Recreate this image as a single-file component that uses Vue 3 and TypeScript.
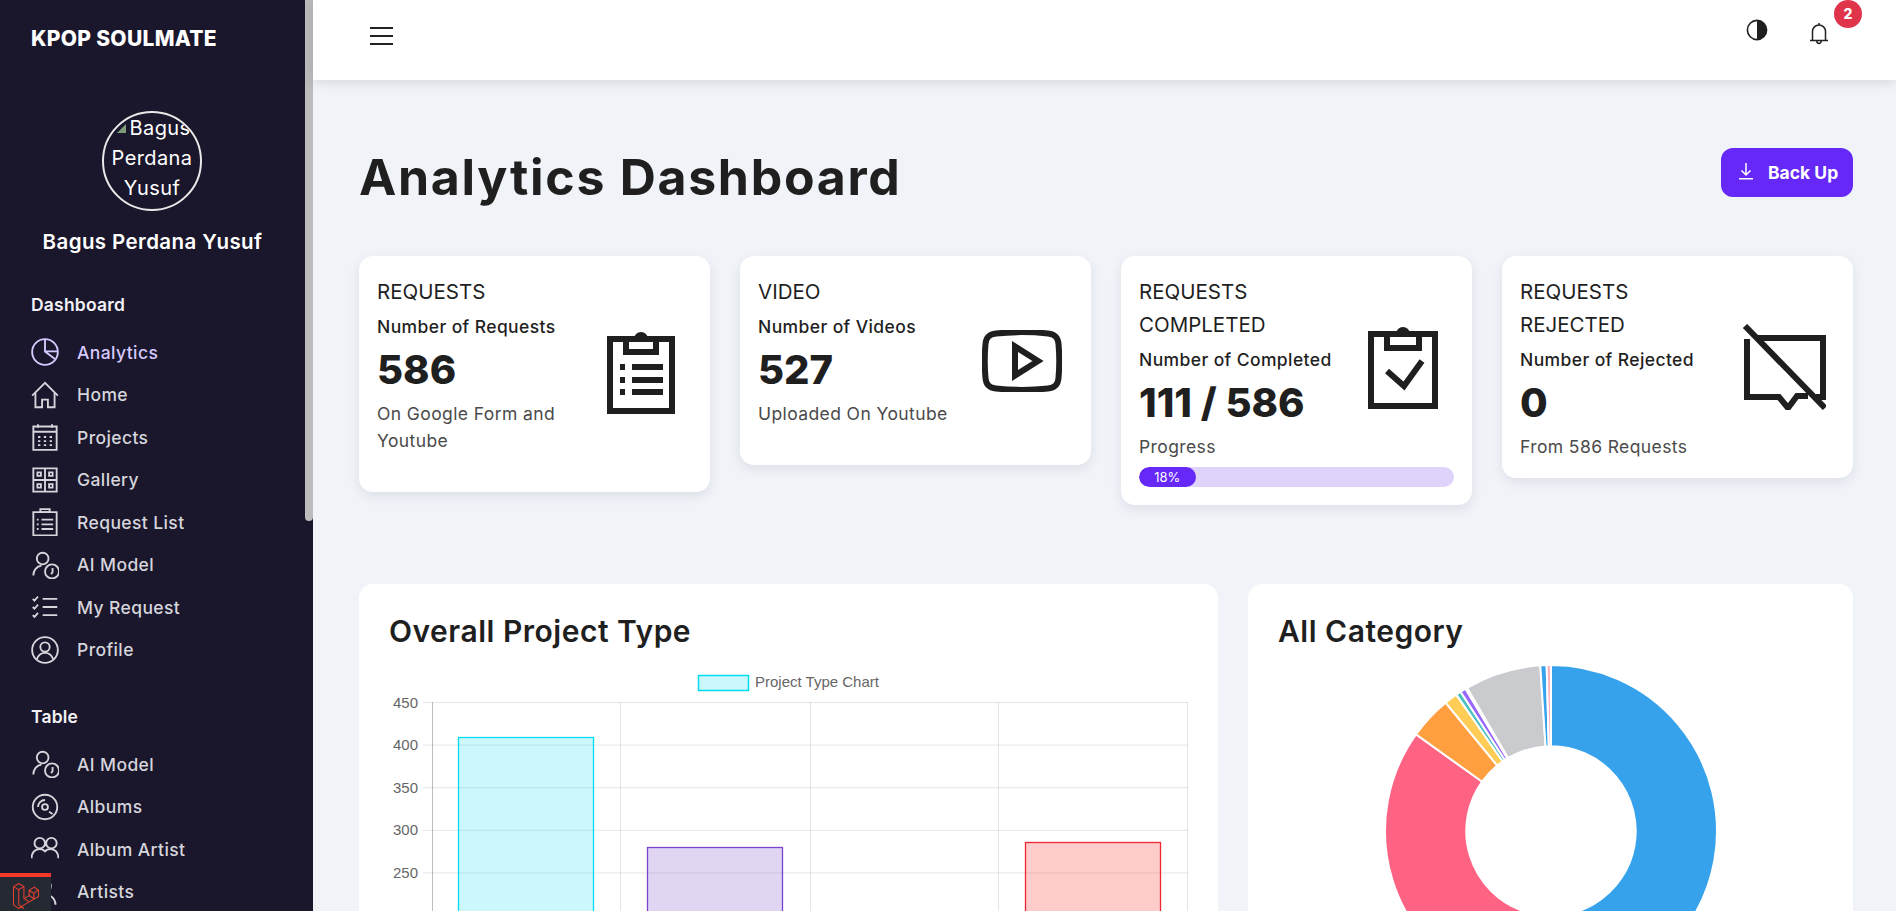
<template>
  <div class="shell">
    <aside class="sidebar">
      <div class="brand">KPOP SOULMATE</div>
      <div class="avatar">
        <svg class="broken" viewBox="0 0 16 16"><path d="M3 13 12 4v9z" fill="#7c9c78" /></svg>Bagus Perdana Yusuf
      </div>
      <div class="user-name">Bagus Perdana Yusuf</div>

      <template v-for="group in menu" :key="group.title">
        <div class="menu-title">{{ group.title }}</div>
        <ul class="menu">
          <li v-for="item in group.items" :key="item.label" class="menu-item" :class="{ active: item.active }">
            <svg class="menu-icon" viewBox="0 0 24 24">
              <path v-for="d in icons[item.icon]" :key="d" :d="d" />
            </svg>
            <span>{{ item.label }}</span>
          </li>
        </ul>
      </template>

      <div class="scroll-thumb"></div>
      <div class="debug-tab">
        <svg viewBox="0 0 25 25" width="26" height="26">
          <path d="M.5 3.500 5.500.5l5 3V15l5-3V7l5-3 4 3v6l-14 8-5 3.500-5-3.500zM.5 3.500l5 3 5-3M5.500 6.500V21l5 3.500M10.500 15l4.500 2.500M15.500 12l4.500 3M15.500 7l4.500 3 4-3M20 10v5" />
        </svg>
      </div>
    </aside>

    <div class="content">
      <header class="topbar">
        <div class="burger"><i></i><i></i><i></i></div>
        <div class="top-actions">
          <svg class="contrast" viewBox="0 0 22 22">
            <circle cx="11" cy="11" r="9.6" fill="none" stroke="#1f1f1f" stroke-width="1.6" />
            <path d="M11 1.4a9.6 9.6 0 0 1 0 19.2z" fill="#1f1f1f" />
          </svg>
          <div class="bell-wrap">
            <svg class="bell" viewBox="0 0 20 24">
              <path d="M1 18.5h18M3.5 18.5V9.5a6.5 6.5 0 0 1 13 0v9M10 1v2M7.8 19a2.2 2.4 0 0 0 4.4 0" />
            </svg>
            <span class="badge">2</span>
          </div>
        </div>
      </header>

      <main class="page">
        <div class="page-head">
          <h1>Analytics Dashboard</h1>
          <button class="backup">
            <svg viewBox="0 0 14 18" width="14" height="18">
              <path d="M7 1v11.5M2.5 8.5 7 13l4.5-4.500M0 16.800h14" />
            </svg>
            Back Up
          </button>
        </div>

        <section class="stats">
          <article class="stat">
            <div class="stat-row">
              <div class="stat-text">
                <h5>REQUESTS</h5>
                <h6>Number of Requests</h6>
                <div class="num">586</div>
                <p class="sub tail">On Google Form and Youtube</p>
              </div>
              <div class="stat-icon raised">
                <svg viewBox="0 0 68 84" width="68" height="84">
                  <path class="heavy" d="M3 9h62v72H3zM19 9v13h30V9" />
                  <path class="knob" d="M27 9a7 7 0 0 1 14 0v3h-5V8h-4v4h-5z" />
                  <path class="heavy" d="M13 37h5M25 37h31M13 50h5M25 50h31M13 62h5M25 62h31" />
                </svg>
              </div>
            </div>
          </article>

          <article class="stat">
            <div class="stat-row">
              <div class="stat-text">
                <h5>VIDEO</h5>
                <h6>Number of Videos</h6>
                <div class="num">527</div>
                <p class="sub tail">Uploaded On Youtube</p>
              </div>
              <div class="stat-icon">
                <svg viewBox="0 0 80 62" width="80" height="62">
                  <path class="heavy" d="M14 3.500C30 1.800 50 1.800 66 3.500 73 4.200 76 7.500 76.500 14c1 11 1 23 0 34-.5 6.500-3.500 9.800-10.500 10.500-16 1.700-36 1.700-52 0C7 57.800 4 54.500 3.500 48c-1-11-1-23 0-34C4 7.500 7 4.200 14 3.500z" />
                  <path class="heavy" d="M33 16.500v29L56 31z" />
                </svg>
              </div>
            </div>
          </article>

          <article class="stat">
            <div class="stat-row">
              <div class="stat-text">
                <h5>REQUESTS COMPLETED</h5>
                <h6>Number of Completed</h6>
                <div class="num">111 / 586</div>
                <p class="sub">Progress</p>
              </div>
              <div class="stat-icon">
                <svg viewBox="0 0 70 84" width="70" height="84">
                  <path class="heavy" d="M3 9h64v72H3zM19 9v14h32V9" />
                  <path class="knob" d="M28 9a7 7 0 0 1 14 0v3h-5V8h-4v4h-5z" />
                  <path class="heavy" d="M19 46l17 15 18-25" />
                </svg>
              </div>
            </div>
            <div class="progress">
              <div class="progress-bar" :style="{ width: completedPct + '%' }">{{ completedPct }}%</div>
            </div>
          </article>

          <article class="stat">
            <div class="stat-row">
              <div class="stat-text">
                <h5>REQUESTS REJECTED</h5>
                <h6>Number of Rejected</h6>
                <div class="num">0</div>
                <p class="sub">From 586 Requests</p>
              </div>
              <div class="stat-icon">
                <svg viewBox="0 0 84 86" width="84" height="86">
                  <path class="heavy" d="M14 14h67v59h-7M5 15v58h32l9 11 9-12h11" />
                  <path class="heavy" d="M3 2l80 82" />
                </svg>
              </div>
            </div>
          </article>
        </section>

        <section class="charts">
          <article class="chart-card">
            <h3>Overall Project Type</h3>
            <svg class="bar-chart" viewBox="0 0 799 260" width="799" height="260">
              <rect x="309.500" y="9.500" width="50" height="15" fill="rgba(0,220,245,.2)" stroke="#00dcf0" stroke-width="1.500" />
              <text x="366" y="21" class="legend">Project Type Chart</text>
              <g v-for="t in yTicks" :key="t.label">
                <line x1="34" x2="799" :y1="t.y" :y2="t.y" class="grid" />
                <text x="29" :y="t.y + 5" class="tick">{{ t.label }}</text>
              </g>
              <line v-for="x in xLines" :key="x" :x1="x" :x2="x" y1="36" y2="260" class="grid" />
              <line x1="43.500" x2="43.500" y1="36" y2="260" class="axis" />
              <rect
                v-for="b in bars"
                :key="b.x"
                :x="b.x"
                :y="b.y"
                width="135"
                height="300"
                :fill="b.fill"
                :stroke="b.stroke"
                stroke-width="1.300"
              />
            </svg>
          </article>

          <article class="chart-card">
            <h3>All Category</h3>
            <svg class="donut" viewBox="-170 -167 340 340" width="340" height="340">
              <path v-for="s in slices" :key="s.from" :d="s.d" :fill="s.color" stroke="#fff" stroke-width="2" />
            </svg>
          </article>
        </section>
      </main>
    </div>
  </div>
</template>

<script setup lang="ts">
const completedPct = 18

const icons: Record<string, string[]> = {
  pie: ['M23 12a11 11 0 1 1-22 0 11 11 0 0 1 22 0z', 'M12 1v10.500h11M12 11.500l8.500 6.500'],
  home: ['M1 12.500 12 1.500l11 11', 'M3.800 10v12.500h5.700V16h5v6.500h5.700V10'],
  calendar: [
    'M2 3h20v20H2z', 'M2 7.500h20M6 1v3M18 1v3',
    'M6 12h2M11 12h2M16 12h2M6 15.500h2M11 15.500h2M16 15.500h2M6 19h2M11 19h2M16 19h2',
  ],
  gallery: ['M2 2h20v20H2z', 'M12 2v20M2 12h20', 'M5.500 5.500h3v3h-3zM15.500 5.500h3v3h-3zM5.500 15.500h3v3h-3zM15.500 15.500h3v3h-3z'],
  list: ['M2 3.500h20v20H2z', 'M8 3.500V1h8v2.500z', 'M9 10h10M9 14h10M9 18h10M5 10h1.500M5 14h1.500M5 18h1.500'],
  model: ['M15 6.500a5 5 0 1 1-10 0 5 5 0 0 1 10 0z', 'M2 21c0-4.500 2.800-8 7-8.500', 'M24 17.500a6 6 0 1 1-12 0 6 6 0 0 1 12 0z', 'M18.500 14.500v3.500l-1.200 2'],
  checks: ['M1.500 5l1.500 1.500L6 3M1.500 12l1.500 1.500L6 10M1.500 19l1.500 1.500L6 17', 'M10 5h12.500M10 12h12.500M10 19h12.500'],
  profile: ['M23 12a11 11 0 1 1-22 0 11 11 0 0 1 22 0z', 'M16 9.500a4 4 0 1 1-8 0 4 4 0 0 1 8 0z', 'M5 20c1.200-3.700 3.800-5.500 7-5.500s5.800 1.800 7 5.500'],
  disc: ['M22.500 12a10.500 10.500 0 1 1-21 0 10.500 10.500 0 0 1 21 0z', 'M14.500 12a2.500 2.500 0 1 1-5 0 2.500 2.500 0 0 1 5 0z', 'M6 12a6 6 0 0 1 6-6M15.500 16l3 2'],
  people: ['M12 7a4.500 4.500 0 1 1-9 0 4.500 4.500 0 0 1 9 0zM22 7a4.500 4.500 0 1 1-9 0 4.500 4.500 0 0 1 9 0z', 'M.5 20c0-5 3-8 7-8 2 0 3.500.7 4.500 2 1-1.300 2.500-2 4.500-2 4 0 7 3 7 8'],
  artist: ['M17 7a5 5 0 1 1-10 0 5 5 0 0 1 10 0z', 'M3 23c0-5 4-9 9-9s9 4 9 9'],
}

const menu = [
  {
    title: 'Dashboard',
    items: [
      { label: 'Analytics', icon: 'pie', active: true },
      { label: 'Home', icon: 'home' },
      { label: 'Projects', icon: 'calendar' },
      { label: 'Gallery', icon: 'gallery' },
      { label: 'Request List', icon: 'list' },
      { label: 'AI Model', icon: 'model' },
      { label: 'My Request', icon: 'checks' },
      { label: 'Profile', icon: 'profile' },
    ],
  },
  {
    title: 'Table',
    items: [
      { label: 'AI Model', icon: 'model' },
      { label: 'Albums', icon: 'disc' },
      { label: 'Album Artist', icon: 'people' },
      { label: 'Artists', icon: 'artist' },
    ],
  },
]

const yTicks = [450, 400, 350, 300, 250, 200].map((v, i) => ({
  label: String(v),
  y: 36.5 + i * 42.6,
}))
const xLines = [231.5, 421.5, 609.5, 798.5]
const bars = [
  { x: 69.5, y: 71.5, fill: 'rgba(0,220,245,.2)', stroke: '#00dcf0' },
  { x: 258.5, y: 181.5, fill: 'rgba(102,44,190,.2)', stroke: '#7a45cc' },
  { x: 636.5, y: 176.5, fill: 'rgba(255,0,0,.2)', stroke: '#f0262e' },
]

// angles in degrees, clockwise from the top of the ring
const ringParts: [number, number, string][] = [
  [0, 200, '#36a2eb'],
  [200, 305.6, '#ff6384'],
  [305.6, 320.6, '#ff9f40'],
  [320.6, 325.2, '#ffcd56'],
  [325.2, 327, '#4bc0c0'],
  [327, 329, '#9966ff'],
  [329, 329.6, '#e4d9ff'],
  [329.6, 356.3, '#c9cbcf'],
  [356.3, 358.5, '#36a2eb'],
  [358.5, 360, '#ffb1c1'],
]

function polar(r: number, deg: number) {
  const a = (deg * Math.PI) / 180
  return `${(r * Math.sin(a)).toFixed(2)} ${(-r * Math.cos(a)).toFixed(2)}`
}

const slices = ringParts.map(([from, to, color]) => {
  const large = to - from > 180 ? 1 : 0
  return {
    from,
    color,
    d: `M${polar(166, from)}A166 166 0 ${large} 1 ${polar(166, to)}L${polar(84.7, to)}A84.7 84.7 0 ${large} 0 ${polar(84.7, from)}Z`,
  }
})
</script>

<style scoped>
.shell {
  display: flex;
  height: 100vh;
  overflow: hidden;
  background: #f0f3f8;
  font-family: Inter, "Liberation Sans", sans-serif;
  color: #1f1f1f;
}

.sidebar {
  position: relative;
  flex: 0 0 313px;
  padding: 0 31px;
  box-sizing: border-box;
  background: #1a162b;
  color: #fff;
  overflow: hidden;
}

.brand {
  margin-top: 26px;
  height: 26px;
  line-height: 26px;
  font-size: 21px;
  font-weight: 800;
  letter-spacing: 0.3px;
  white-space: nowrap;
}

.avatar {
  width: 100px;
  height: 100px;
  margin: 59px 0 0 71px;
  box-sizing: border-box;
  border: 2px solid #e8e8e8;
  border-radius: 50%;
  overflow: hidden;
  text-align: center;
  font-size: 20px;
  letter-spacing: 0.4px;
  line-height: 30px;
  color: #fff;
}

.broken {
  width: 16px;
  height: 16px;
  vertical-align: -1px;
}

.user-name {
  margin: 17px 4px 0 -4px;
  height: 28px;
  line-height: 28px;
  text-align: center;
  font-size: 20.500px;
  font-weight: 600;
  letter-spacing: 0.4px;
  white-space: nowrap;
}

.menu-title {
  margin-top: 37px;
  height: 24px;
  line-height: 24px;
  font-size: 17.500px;
  font-weight: 600;
  letter-spacing: 0.2px;
  color: #f2f2f6;
}

.menu + .menu-title {
  margin-top: 34px;
}

.menu {
  margin: 14px 0 0;
  padding: 0;
  list-style: none;
}

.menu-item {
  display: flex;
  align-items: center;
  gap: 18px;
  height: 42.500px;
  font-size: 17.500px;
  font-weight: 500;
  letter-spacing: 0.4px;
  color: #d5d5dc;
  white-space: nowrap;
}

.menu-item.active {
  color: #d6c9ff;
}

.menu-icon {
  flex: 0 0 28px;
  width: 28px;
  height: 28px;
  fill: none;
  stroke: currentColor;
  stroke-width: 1.600;
}

.scroll-thumb {
  position: absolute;
  top: 0;
  right: 0;
  width: 8px;
  height: 521px;
  border-radius: 0 0 4px 4px;
  background: #bcbcbc;
}

.debug-tab {
  position: absolute;
  left: 0;
  bottom: 0;
  width: 51px;
  height: 38px;
  box-sizing: border-box;
  border-top: 4px solid #f4392b;
  background: #252a32;
  display: flex;
  align-items: center;
  justify-content: center;
}

.debug-tab svg {
  fill: none;
  stroke: #e8402f;
  stroke-width: 1;
  margin-top: 3px;
}

.content {
  flex: 1;
  min-width: 0;
}

.topbar {
  position: relative;
  display: flex;
  align-items: center;
  justify-content: space-between;
  height: 80px;
  padding: 0 36px 0 57px;
  box-sizing: border-box;
  background: #fff;
  box-shadow: 0 2px 12px rgba(0, 0, 0, 0.12);
}

.burger {
  display: flex;
  flex-direction: column;
  gap: 6.500px;
  width: 23px;
  margin-top: -8px;
}

.burger i {
  height: 1.500px;
  background: #222;
}

.top-actions {
  display: flex;
  align-items: center;
  gap: 41px;
  margin-top: -20px;
}

.contrast {
  width: 22px;
  height: 22px;
}

.bell-wrap {
  position: relative;
  width: 20px;
  height: 24px;
  margin-top: 8px;
  margin-right: 31px;
}

.bell {
  width: 20px;
  height: 24px;
  fill: none;
  stroke: #222;
  stroke-width: 1.500;
}

.badge {
  position: absolute;
  left: 25px;
  top: -22px;
  width: 28px;
  height: 28px;
  border-radius: 50%;
  background: #e0344b;
  color: #fff;
  font-size: 14px;
  font-weight: 800;
  line-height: 28px;
  text-align: center;
}

.page {
  padding: 68px 43px 0 46px;
}

.page-head {
  display: flex;
  align-items: center;
  justify-content: space-between;
  height: 49px;
  margin-bottom: 59px;
}

h1 {
  margin: 0;
  padding-top: 9px;
  font-size: 50px;
  font-weight: 700;
  letter-spacing: 1.700px;
  line-height: 58px;
  color: #1f1f1f;
}

.backup {
  display: flex;
  align-items: center;
  gap: 15px;
  width: 132px;
  height: 49px;
  padding: 0 0 0 18px;
  border: 0;
  border-radius: 12px;
  background: #6528f7;
  color: #fff;
  font-family: inherit;
  font-size: 17.500px;
  font-weight: 700;
  white-space: nowrap;
}

.backup svg {
  fill: none;
  stroke: #fff;
  stroke-width: 1.500;
  margin-top: -4px;
}

.stats {
  display: grid;
  grid-template-columns: repeat(4, 351px);
  gap: 30px;
  align-items: start;
  margin-bottom: 79px;
}

.stat {
  padding: 18px;
  border-radius: 14px;
  background: #fff;
  box-shadow: 0 4px 12px rgba(30, 40, 70, 0.09);
}

.stat-row {
  display: flex;
  align-items: center;
}

.stat-text {
  flex: 0 0 213px;
  padding-top: 1px;
}

.stat-icon {
  flex: 1;
  display: flex;
  justify-content: center;
}

.stat-icon.raised {
  margin-top: -4px;
}

.heavy {
  fill: none;
  stroke: #1f1f1f;
  stroke-width: 6;
}

.knob {
  fill: #1f1f1f;
}

h5 {
  margin: 0;
  font-size: 20.500px;
  font-weight: 400;
  line-height: 33px;
}

h6 {
  margin: 7px 0 0;
  font-size: 17.500px;
  font-weight: 500;
  letter-spacing: 0.4px;
  line-height: 24px;
}

.num {
  margin-top: 9px;
  font-size: 40px;
  font-weight: 800;
  line-height: 44px;
}

.sub {
  margin: 8px 0 0;
  font-size: 17.500px;
  letter-spacing: 0.4px;
  line-height: 27px;
  color: #4a4a4a;
}

.sub.tail {
  margin-bottom: 20px;
}

.progress {
  height: 20px;
  margin-top: 7px;
  border-radius: 10px;
  background: #dfd3fb;
  overflow: hidden;
}

.progress-bar {
  height: 100%;
  border-radius: 10px;
  background: #6528f7;
  color: #fff;
  font-size: 13px;
  line-height: 20px;
  text-align: center;
}

.charts {
  display: grid;
  grid-template-columns: 859px 605px;
  gap: 30px;
}

.chart-card {
  height: 520px;
  padding: 30px;
  box-sizing: border-box;
  border-radius: 14px;
  background: #fff;
}

h3 {
  margin: 0;
  font-size: 30px;
  font-weight: 600;
  letter-spacing: 0.500px;
  line-height: 34px;
  color: #1f1f1f;
}

.bar-chart {
  display: block;
  margin-top: 18px;
}

.legend,
.tick {
  font-family: "Liberation Sans", Arial, sans-serif;
  font-size: 15px;
  fill: #666;
}

.tick {
  text-anchor: end;
}

.grid {
  stroke: rgba(0, 0, 0, 0.1);
  stroke-width: 1;
}

.axis {
  stroke: rgba(0, 0, 0, 0.25);
  stroke-width: 1;
}

.donut {
  display: block;
  margin: 16px auto 0;
}
</style>

<style>
html,
body {
  margin: 0;
  overflow: hidden;
}
</style>
